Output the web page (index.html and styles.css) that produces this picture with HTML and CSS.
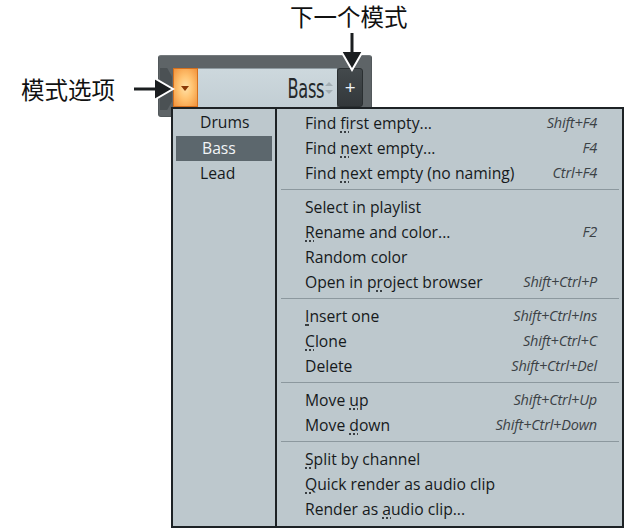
FILE: index.html
```html
<!DOCTYPE HTML>
<html>
	<head>
		<meta charset="utf-8">
		<title>Pattern Selector</title>
		<link rel="stylesheet" href="styles.css">
	</head>
	<body>
		<div class="stage">
			<div class="note note-top">下一个模式</div>
			<svg class="arrow arrow-down" width="30" height="42" viewBox="0 0 30 42">
				<path d="M12.5 1 H17.5 V20 H26 L15 39 L4 20 H12.5 Z" fill="#1b1e20" stroke="#fff" stroke-width="2" stroke-linejoin="miter"/>
			</svg>
			<div class="note note-left">模式选项</div>
			<svg class="arrow arrow-right" width="44" height="28" viewBox="0 0 44 28">
				<path d="M1 11.5 V16.5 H22 V25 L41 14 L22 3 V11.5 Z" fill="#1b1e20" stroke="#fff" stroke-width="2" stroke-linejoin="miter"/>
			</svg>

			<div class="panel">
				<div class="notch"></div>
				<div class="pick"><span class="tri"></span></div>
				<div class="field">
					<span class="name">Bass</span>
					<span class="spin"><i class="up"></i><i class="dn"></i></span>
				</div>
				<div class="plus">+</div>
			</div>

			<div class="menu">
				<div class="patterns">
					<div class="pat">Drums</div>
					<div class="pat sel">Bass</div>
					<div class="pat">Lead</div>
				</div>
				<div class="cmds">
					<div class="row"><span>Find <u>f</u>irst empty...</span><em>Shift+F4</em></div>
					<div class="row"><span>Find <u>n</u>ext empty...</span><em>F4</em></div>
					<div class="row"><span>Find <u>n</u>ext empty (no naming)</span><em>Ctrl+F4</em></div>
					<div class="sep"></div>
					<div class="row"><span>Select in playlist</span><em></em></div>
					<div class="row"><span><u>R</u>ename and color...</span><em>F2</em></div>
					<div class="row"><span>Random color</span><em></em></div>
					<div class="row"><span>Open in p<u>r</u>oject browser</span><em>Shift+Ctrl+P</em></div>
					<div class="sep"></div>
					<div class="row"><span><u>I</u>nsert one</span><em>Shift+Ctrl+Ins</em></div>
					<div class="row"><span><u>C</u>lone</span><em>Shift+Ctrl+C</em></div>
					<div class="row"><span>Delete</span><em>Shift+Ctrl+Del</em></div>
					<div class="sep"></div>
					<div class="row"><span>Move <u>u</u>p</span><em>Shift+Ctrl+Up</em></div>
					<div class="row"><span>Move <u>d</u>own</span><em>Shift+Ctrl+Down</em></div>
					<div class="sep"></div>
					<div class="row"><span><u>S</u>plit by channel</span><em></em></div>
					<div class="row"><span><u>Q</u>uick render as audio clip</span><em></em></div>
					<div class="row"><span>Render as <u>a</u>udio clip...</span><em></em></div>
				</div>
			</div>
		</div>
	</body>
</html>
```
FILE: styles.css
```css
body{
	margin: 0;
	background: #fff;
	font-family: "Open Sans", "Noto Sans", sans-serif;
}
.stage{
	position: relative;
	width: 626px;
	height: 528px;
	overflow: hidden;
	padding-top: 55px;
	box-sizing: border-box;
}

/* annotations */
.note{
	position: absolute;
	font-family: "Noto Sans CJK SC", sans-serif;
	font-size: 23.5px;
	line-height: 30px;
	color: #111;
}
.note-top{
	left: 290px;
	top: 1px;
}
.note-left{
	left: 21px;
	top: 74px;
}
.arrow{
	position: absolute;
	z-index: 3;
}
.arrow-down{
	left: 337px;
	top: 31px;
}
.arrow-right{
	left: 132px;
	top: 75px;
}

/* pattern widget */
.panel{
	position: relative;
	display: flex;
	margin-left: 158px;
	width: 214px;
	height: 62px;
	box-sizing: border-box;
	padding: 12px 8px 0 14px;
	background: #5e6467;
	border: 1px solid #52585b;
	border-top-color: #747a7d;
	border-radius: 3px;
}
.notch{
	position: absolute;
	left: 1px;
	top: 12px;
	width: 12px;
	height: 42px;
	background: #4b5154;
	clip-path: polygon(0 0, 60% 0, 100% 20%, 100% 80%, 60% 100%, 0 100%);
}
.pick{
	width: 25px;
	height: 39px;
	box-sizing: border-box;
	border: 1px solid #d4701e;
	background: radial-gradient(ellipse at 50% 50%, #ffe2a8 0%, #ffc270 45%, #f2923a 100%);
	display: flex;
	align-items: center;
	justify-content: center;
}
.tri{
	width: 0;
	height: 0;
	border-left: 4px solid transparent;
	border-right: 4px solid transparent;
	border-top: 5px solid #8a3806;
	margin-top: 2px;
}
.field{
	width: 141px;
	height: 39px;
	box-sizing: border-box;
	background: linear-gradient(#cdd8dd, #c2ced4);
	border-top: 1px solid #8e9aa0;
	display: flex;
	align-items: center;
	justify-content: flex-end;
	padding-right: 4px;
}
.name{
	display: inline-block;
	font-family: "DejaVu Sans", sans-serif;
	font-size: 27px;
	color: #24282b;
	transform: scaleX(0.6);
	transform-origin: right center;
	margin-right: 1px;
	letter-spacing: -0.5px;
}
.spin{
	display: flex;
	flex-direction: column;
	gap: 4px;
	width: 8px;
	align-items: center;
}
.spin i{
	width: 0;
	height: 0;
	border-left: 4px solid transparent;
	border-right: 4px solid transparent;
}
.spin .up{
	border-bottom: 4px solid #a3aeb3;
}
.spin .dn{
	border-top: 4px solid #a3aeb3;
}
.plus{
	width: 26px;
	height: 39px;
	box-sizing: border-box;
	background: linear-gradient(#43494c, #33383b);
	border: 1px solid #2a2f31;
	border-radius: 3px;
	color: #eef4f8;
	font-size: 19px;
	display: flex;
	align-items: center;
	justify-content: center;
	padding-bottom: 2px;
}

/* popup menu */
.menu{
	position: relative;
	z-index: 2;
	display: flex;
	margin-left: 171px;
	margin-top: -10px;
	width: 453px;
	height: 421px;
	box-sizing: border-box;
	border: 2px solid #1d2225;
	background: #bdc8cd;
	color: #161a1c;
	font-size: 15.7px;
}
.patterns{
	width: 104px;
	padding: 1px 3px;
	box-sizing: border-box;
	border-right: 2px solid #1d2225;
}
.pat{
	height: 25px;
	line-height: 25px;
	padding-left: 24px;
}
.pat.sel{
	background: #5c676d;
	color: #f2f5f7;
	padding-left: 26px;
	margin-top: 1px;
	line-height: 24px;
}
.cmds{
	flex: 1;
	padding: 1px 0;
}
.row{
	display: flex;
	justify-content: space-between;
	align-items: center;
	height: 25px;
	padding: 0 25px 0 28px;
}
.row u{
	text-decoration: underline dotted;
	text-underline-offset: 3px;
}
.row em{
	font-size: 14.5px;
	color: #3b4145;
	letter-spacing: -0.2px;
}
.sep{
	height: 9px;
	margin: 0 3px 0 4px;
	display: flex;
	align-items: center;
}
.sep::before{
	content: "";
	flex: 1;
	height: 1px;
	background: #8c989e;
}
```
